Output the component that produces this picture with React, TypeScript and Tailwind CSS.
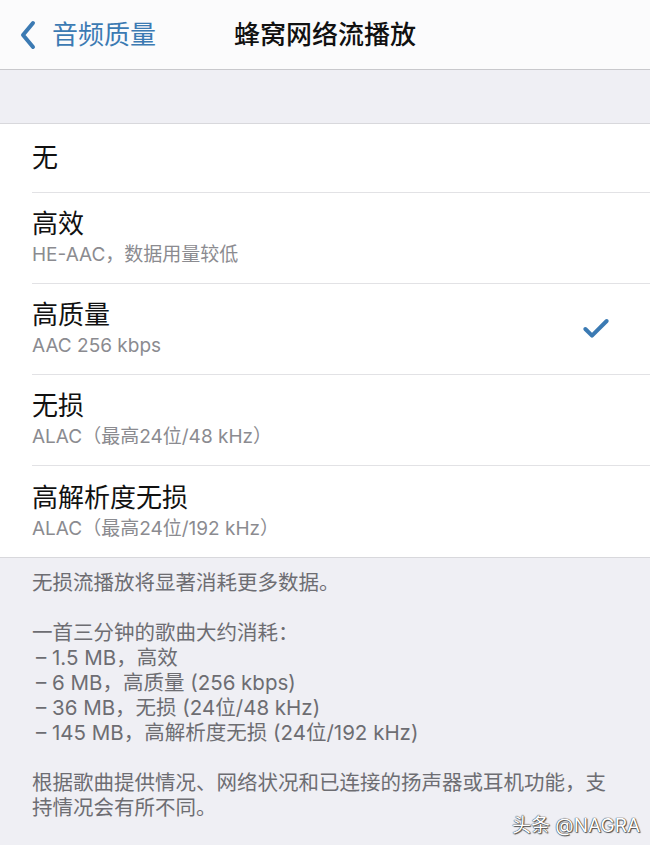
import { Check } from "lucide-react"

const rows = [
  { title: "无", sub: null, checked: false },
  { title: "高效", sub: "HE-AAC，数据用量较低", checked: false },
  { title: "高质量", sub: "AAC 256 kbps", checked: true },
  { title: "无损", sub: "ALAC（最高24位/48 kHz）", checked: false },
  { title: "高解析度无损", sub: "ALAC（最高24位/192 kHz）", checked: false },
]

const font = { fontFamily: 'Inter, "Noto Sans CJK SC", "Noto Sans", sans-serif' }

export default function App() {
  return (
    <div className="w-[650px] h-[845px] overflow-hidden bg-[#efeff4] relative" style={font}>
      {/* nav bar */}
      <header className="h-[70px] bg-[#fbfbfc] border-b border-[#c8c8cc] grid grid-cols-[1fr_auto_1fr] items-center">
        <div className="flex items-center pl-[18px] text-[#3b7ab3]">
          <svg width="22" height="30" viewBox="0 0 22 30" fill="none">
            <path d="M15 3 L5 15 L15 27" stroke="currentColor" strokeWidth="4" strokeLinecap="round" strokeLinejoin="round" />
          </svg>
          <span className="ml-[12px] text-[26px] leading-none">音频质量</span>
        </div>
        <h1 className="text-[26px] leading-none font-medium text-[#111]">蜂窝网络流播放</h1>
        <div />
      </header>

      <div className="h-[54px] border-b border-[#d8d8dc]" />

      {/* options */}
      <ul className="bg-white border-b border-[#d8d8dc]">
        {rows.map((r, i) => (
          <li key={i} className="pl-[32px]">
            <div
              className={`flex items-center justify-between pr-[38px] ${r.sub ? "h-[91px]" : "h-[69px]"} ${
                i < rows.length - 1 ? "border-b border-[#e2e2e5]" : ""
              }`}
            >
              <div className="flex flex-col">
                <span className="text-[26px] leading-[32px] text-[#111]">{r.title}</span>
                {r.sub && <span className="text-[19px] leading-[26px] text-[#8b8b90] mt-[2px]">{r.sub}</span>}
              </div>
              {r.checked && <Check size={32} strokeWidth={3} className="text-[#3b7ab3]" />}
            </div>
          </li>
        ))}
      </ul>

      {/* footer */}
      <div className="px-[32px] pt-[12px] text-[20.5px] leading-[25px] text-[#6d6d72]">
        <p>无损流播放将显著消耗更多数据。</p>
        <p className="mt-[25px]">一首三分钟的歌曲大约消耗：</p>
        <p className="pl-[4px]">– 1.5 MB，高效</p>
        <p className="pl-[4px]">– 6 MB，高质量 (256 kbps)</p>
        <p className="pl-[4px]">– 36 MB，无损 (24位/48 kHz)</p>
        <p className="pl-[4px]">– 145 MB，高解析度无损 (24位/192 kHz)</p>
        <p className="mt-[25px]">
          根据歌曲提供情况、网络状况和已连接的扬声器或耳机功能，支
          <br />
          持情况会有所不同。
        </p>
      </div>

      {/* watermark */}
      <div
        className="absolute right-[10px] bottom-[10px] text-[19px] leading-none text-white"
        style={{ textShadow: "0 0 1px #333, 0 0 1px #333, 1px 1px 1px #555" }}
      >
        头条 @NAGRA
      </div>
    </div>
  )
}
